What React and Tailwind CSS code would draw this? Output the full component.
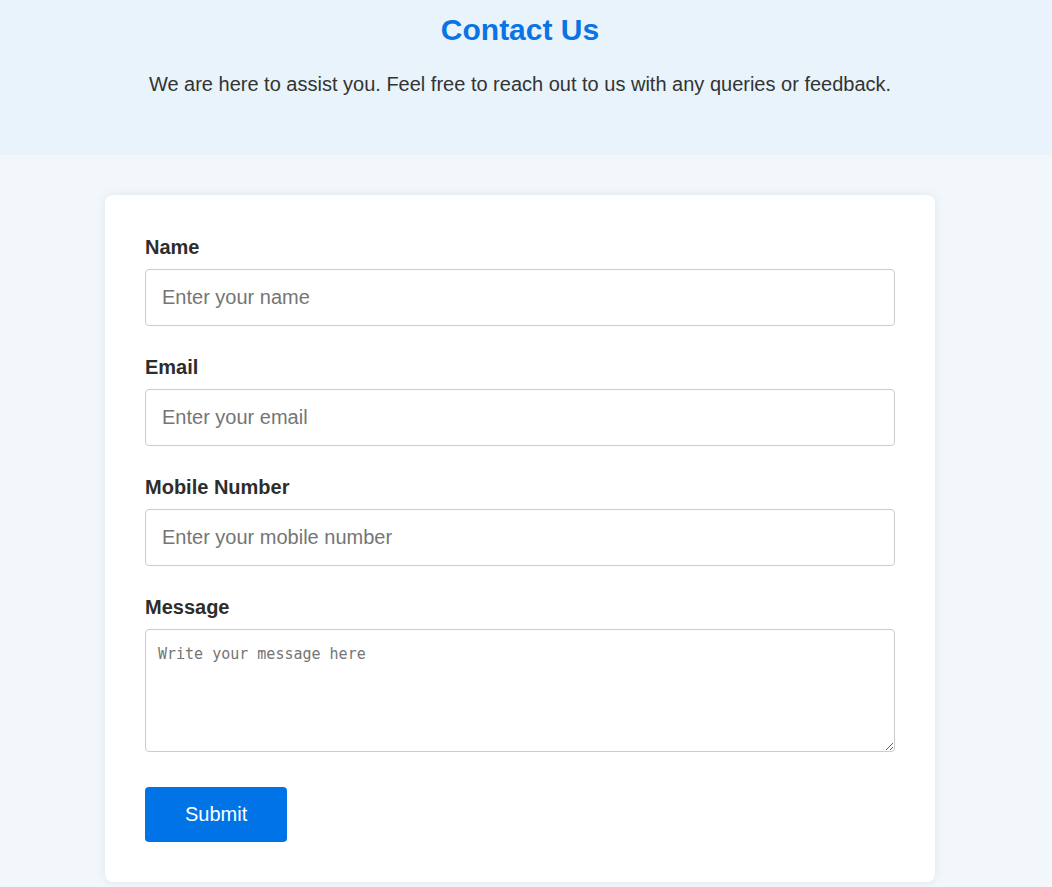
import React from 'react';

const fields = [
  { label: 'Name', type: 'text', placeholder: 'Enter your name' },
  { label: 'Email', type: 'email', placeholder: 'Enter your email' },
  { label: 'Mobile Number', type: 'tel', placeholder: 'Enter your mobile number' },
];

export default function App() {
  return (
    <div className="min-h-screen bg-[#f2f7fb] font-['Liberation_Sans',Arial,sans-serif] text-[#333]">
      {/* Header */}
      <div className="bg-[#e8f3fc]">
        <div className="w-[1040px] pt-[13px] pb-[59px] text-center">
          <h1 className="text-[30px] font-bold text-[#0a74e4] leading-[34px]">Contact Us</h1>
          <p className="mt-[26px] text-[20px] leading-[23px] text-[#333]">
            We are here to assist you. Feel free to reach out to us with any queries or feedback.
          </p>
        </div>
      </div>

      {/* Form card */}
      <div className="w-[1040px] pt-10 pb-1">
        <form
          className="mx-auto w-[830px] bg-white rounded-lg px-10 pt-[41px] pb-10 shadow-[0_0_10px_rgba(0,0,0,0.08)]"
          onSubmit={(e) => e.preventDefault()}
        >
          {fields.map((f) => (
            <div key={f.label} className="mb-[30px]">
              <label className="block mb-[10px] text-[20px] leading-[23px] font-bold text-[#2d2d2d]">
                {f.label}
              </label>
              <input
                type={f.type}
                placeholder={f.placeholder}
                className="block w-full p-4 text-[20px] leading-[23px] border border-[#ccc] rounded placeholder:text-[#757575] outline-none"
              />
            </div>
          ))}

          <div className="mb-[35px]">
            <label className="block mb-[10px] text-[20px] leading-[23px] font-bold text-[#2d2d2d]">
              Message
            </label>
            <textarea
              placeholder="Write your message here"
              className="block w-full h-[123px] px-3 pt-[15px] pb-3 text-[15px] leading-[18px] font-['DejaVu_Sans_Mono',monospace] border border-[#ccc] rounded placeholder:text-[#757575] outline-none"
            />
          </div>

          <button
            type="submit"
            className="px-10 py-4 text-[20px] leading-[23px] text-white bg-[#0073e6] rounded"
          >
            Submit
          </button>
        </form>
      </div>
    </div>
  );
}
